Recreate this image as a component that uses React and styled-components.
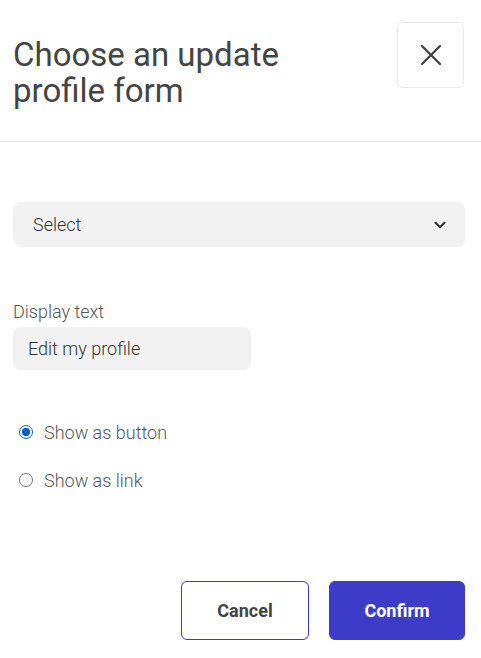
import React, { useState } from "react";
import styled, { createGlobalStyle } from "styled-components";

const GlobalStyle = createGlobalStyle`
  * { box-sizing: border-box; }
  body {
    margin: 0;
    background: #ffffff;
    font-family: Roboto, "Liberation Sans", Arial, sans-serif;
    color: #444;
  }
`;

function App() {
    const [mode, setMode] = useState("button");

    return (
        <>
            <GlobalStyle />
            <Dialog>
                <Header>
                    <Title>Choose an update profile form</Title>
                    <CloseButton aria-label="Close">
                        <svg width="22" height="22" viewBox="0 0 22 22">
                            <path d="M2 2 L20 20 M20 2 L2 20" stroke="#444" strokeWidth="2.4" strokeLinecap="round" fill="none" />
                        </svg>
                    </CloseButton>
                </Header>
                <Body>
                    <SelectBox>
                        <span>Select</span>
                        <svg width="14" height="14" viewBox="0 0 14 14">
                            <path d="M2.5 4.8 L7 9.2 L11.5 4.8" stroke="#333" strokeWidth="2.2" fill="none" strokeLinecap="round" strokeLinejoin="round" />
                        </svg>
                    </SelectBox>

                    <Label>Display text</Label>
                    <TextInput defaultValue="Edit my profile" />

                    <RadioGroup>
                        <RadioRow>
                            <Radio
                                type="radio"
                                name="mode"
                                checked={mode === "button"}
                                onChange={() => setMode("button")}
                            />
                            Show as button
                        </RadioRow>
                        <RadioRow>
                            <Radio
                                type="radio"
                                name="mode"
                                checked={mode === "link"}
                                onChange={() => setMode("link")}
                            />
                            Show as link
                        </RadioRow>
                    </RadioGroup>

                    <Footer>
                        <ActionButton>Cancel</ActionButton>
                        <ActionButton primary>Confirm</ActionButton>
                    </Footer>
                </Body>
            </Dialog>
        </>
    );
}

export default App;

const Dialog = styled.div`
width: 481px;
height: 658px;
display: flex;
flex-direction: column;
background: #fff;
`;

const Header = styled.div`
display: flex;
justify-content: space-between;
align-items: flex-start;
padding: 22px 17px 32px 13px;
border-bottom: 1px solid #ececec;
`;

const Title = styled.h1`
margin: 15px 0 0 0;
width: 320px;
font-size: 33px;
line-height: 36px;
font-weight: 400;
color: #444;
`;

const CloseButton = styled.button`
width: 67px;
height: 66px;
display: flex;
align-items: center;
justify-content: center;
background: #fff;
border: 1px solid #ececec;
border-radius: 6px;
padding: 0;
`;

const Body = styled.div`
display: flex;
flex-direction: column;
padding: 0 16px 0 13px;
`;

const SelectBox = styled.div`
margin-top: 60px;
height: 45px;
display: flex;
align-items: center;
justify-content: space-between;
padding: 0 18px 0 20px;
background: #f2f2f2;
border-radius: 8px;
font-size: 18px;
font-weight: 300;
color: #333;
`;

const Label = styled.label`
margin-top: 55px;
line-height: 20px;
font-size: 18px;
font-weight: 300;
color: #555;
`;

const TextInput = styled.input`
margin-top: 5px;
width: 238px;
height: 43px;
border: none;
outline: none;
border-radius: 8px;
background: #f2f2f2;
padding: 0 15px;
font-family: inherit;
font-size: 18px;
font-weight: 300;
color: #333;
`;

const RadioGroup = styled.div`
margin-top: 50px;
display: flex;
flex-direction: column;
gap: 24px;
padding-left: 6px;
`;

const RadioRow = styled.label`
display: flex;
align-items: center;
gap: 11px;
height: 24px;
font-size: 18px;
font-weight: 300;
color: #555;
`;

const Radio = styled.input`
margin: 0;
width: 14px;
height: 14px;
accent-color: #0a5fc2;
`;

const Footer = styled.div`
margin-top: 89px;
display: flex;
justify-content: flex-end;
gap: 20px;
`;

const ActionButton = styled.button`
width: ${props => (props.primary ? "136px" : "128px")};
height: 59px;
border-radius: 6px;
border: 1px solid #3d3cc8;
background: ${props => (props.primary ? "#3d3cc8" : "#fff")};
color: ${props => (props.primary ? "#fff" : "#444")};
font-family: inherit;
font-size: 18px;
font-weight: 700;
`;
